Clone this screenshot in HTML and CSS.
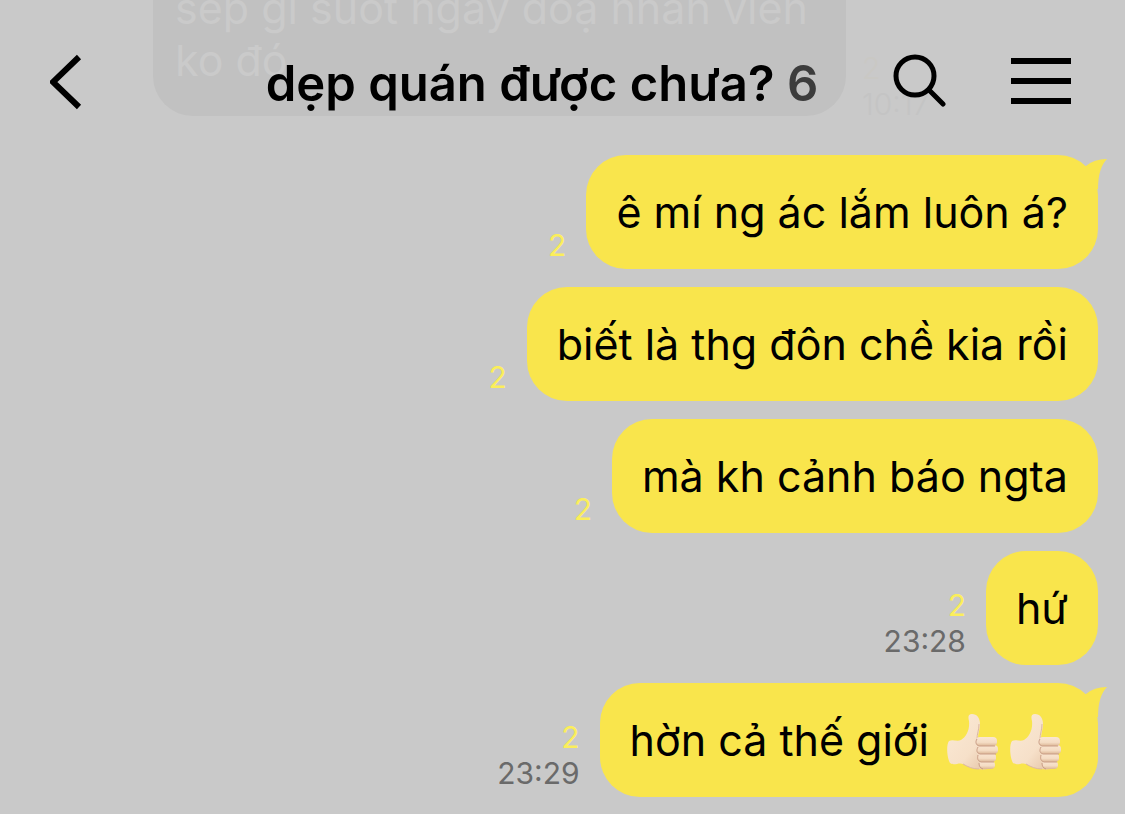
FILE: index.html
```html
<!DOCTYPE html>
<html lang="vi">
<head>
	<meta charset="utf-8">
	<meta name="viewport" content="width=device-width, initial-scale=1">
	<title>dẹp quán được chưa?</title>
	<link rel="stylesheet" href="styles.css">
</head>
<body>

<!-- shared drawings -->
<svg class="defs" aria-hidden="true">
	<defs>
		<linearGradient id="skin" x1="0" y1="0" x2="1" y2="1">
			<stop offset="0" stop-color="#fbead6"/>
			<stop offset="0.6" stop-color="#f6e0c9"/>
			<stop offset="1" stop-color="#e2bf9f"/>
		</linearGradient>
		<linearGradient id="finger" x1="0" y1="0" x2="0" y2="1">
			<stop offset="0" stop-color="#fae6d2"/>
			<stop offset="0.6" stop-color="#f4dcc4"/>
			<stop offset="1" stop-color="#dcb695"/>
		</linearGradient>
		<symbol id="tail" viewBox="0 0 28 36">
			<path d="M6 11Q14 4 27 4Q18 13 18 34L0 34L0 11Z"/>
		</symbol>
		<symbol id="thumb" viewBox="0 0 54 58">
			<path fill="url(#skin)" d="M3 28C7 26 11 29 15 27C20 24 24 17 23 8C22 4 22 1 26 1C31 1 34 5 34 11C34 16 32 21 32 25L44 26L46 53C44 57 38 57 33 56C27 56 22 54 17 51C13 49 8 53 4 50C1 45 0 32 3 28Z"/>
			<path fill="none" stroke="#dcb8a2" d="M17 51C22 54 27 56 33 56M33 11C33 17 31 21 31 26"/>
			<rect x="33" y="48" width="16" height="8" rx="4" fill="url(#finger)"/>
			<rect x="32" y="40" width="18" height="9" rx="4" fill="url(#finger)"/>
			<rect x="31" y="32" width="21" height="9" rx="4" fill="url(#finger)"/>
			<rect x="30" y="24" width="21" height="9" rx="4" fill="url(#finger)"/>
			<path fill="none" stroke="#c99d86" d="M31 26C29 29 30 32 33 33L49 33M32 34C30 38 31 40 34 41L50 41M32 42C31 46 32 48 35 49L48 49M33 50C33 53 34 55 37 56"/>
		</symbol>
	</defs>
</svg>

<header class="topbar">
	<button class="icon-btn" type="button" aria-label="Quay lại">
		<svg width="32" height="56" viewBox="0 0 32 56"><path d="M29 3L3 28L29 53" fill="none" stroke="#000" stroke-width="6"/></svg>
	</button>
	<h1 class="title">dẹp quán được chưa? <span class="members">6</span></h1>
	<button class="icon-btn" type="button" aria-label="Tìm kiếm">
		<svg width="54" height="56" viewBox="0 0 54 56"><circle cx="23" cy="22" r="19" fill="none" stroke="#000" stroke-width="5"/><path d="M37 36L51 50" stroke="#000" stroke-width="5" stroke-linecap="round"/></svg>
	</button>
	<button class="icon-btn menu" type="button" aria-label="Menu">
		<svg width="61" height="48" viewBox="0 0 61 48"><path d="M1 3H61M1 23H61M1 43H61" stroke="#000" stroke-width="6"/></svg>
	</button>
</header>

<main class="chat">
	<div class="message received">
		<p class="bubble">sếp gì suốt ngày doạ nhân viên ko đó</p>
		<div class="meta"><span class="unread">2</span><time>10:17</time></div>
	</div>
	<div class="message sent">
		<div class="meta"><span class="unread">2</span></div>
		<p class="bubble">ê mí ng ác lắm luôn á?<svg class="tail"><use href="#tail"/></svg></p>
	</div>
	<div class="message sent">
		<div class="meta"><span class="unread">2</span></div>
		<p class="bubble">biết là thg đôn chề kia rồi</p>
	</div>
	<div class="message sent">
		<div class="meta"><span class="unread">2</span></div>
		<p class="bubble">mà kh cảnh báo ngta</p>
	</div>
	<div class="message sent">
		<div class="meta"><span class="unread">2</span><time>23:28</time></div>
		<p class="bubble">hứ</p>
	</div>
	<div class="message sent">
		<div class="meta"><span class="unread">2</span><time>23:29</time></div>
		<p class="bubble">hờn cả thế giới <span class="emojis"><svg class="emoji"><use href="#thumb"/></svg><svg class="emoji"><use href="#thumb"/></svg></span><svg class="tail"><use href="#tail"/></svg></p>
	</div>
</main>

</body>
</html>
```
FILE: styles.css
```css
* {
	box-sizing: border-box;
}

body {
	margin: 0;
	height: 100vh;
	overflow: hidden;
	background-color: #c9c9c9;
	color: #000;
	font-family: Inter, "Noto Sans", sans-serif;
}

.defs {
	position: absolute;
	width: 0;
	height: 0;
}

/* the bar floats over the scrolled messages */
.topbar {
	position: absolute;
	top: 0;
	left: 0;
	right: 0;
	z-index: 1;
	display: flex;
	align-items: center;
	padding: 50px 54px 0 50px;
}

.icon-btn {
	display: flex;
	flex: none;
	padding: 0;
	border: 0;
	background: none;
	cursor: pointer;
}

.menu {
	margin-left: 64px;
}

.title {
	flex: 1;
	margin: 0;
	padding: 4px 0 0 110px;
	font-size: 49px;
	line-height: 60px;
	font-weight: 600;
	text-align: center;
	white-space: nowrap;
}

.members {
	color: #3c3c3c;
}

.chat {
	display: flex;
	flex-direction: column;
	justify-content: flex-end;
	gap: 18px;
	height: 100%;
	padding: 0 27px 17px 153px;
}

.message {
	display: flex;
	flex: none;
	align-items: flex-end;
	gap: 20px;
}

.sent {
	justify-content: flex-end;
}

.bubble {
	position: relative;
	margin: 0;
	padding: 30px;
	border-radius: 40px;
	background-color: #f9e54c;
	font-size: 43px;
	line-height: 54px;
}

.meta {
	display: flex;
	flex-direction: column;
	align-items: flex-end;
	padding-bottom: 6px;
	color: #6a6a6a;
	font-size: 30px;
	line-height: 36px;
}

.unread {
	color: #fbee5a;
}

.tail {
	position: absolute;
	top: 0;
	right: -10px;
	width: 28px;
	height: 36px;
	fill: #f9e54c;
}

.emojis {
	display: inline-flex;
	gap: 9px;
	padding: 0 5px;
	vertical-align: middle;
}

.emoji {
	width: 54px;
	height: 58px;
	margin: -8px 0 -4px;
}

/* older message, dimmed under the top bar */
.received {
	gap: 16px;
	margin-bottom: 21px;
}

.received .bubble {
	max-width: 693px;
	padding: 30px 22px;
	background-color: #c1c1c1;
	color: #cacaca;
	line-height: 52px;
}

.received .meta {
	margin-bottom: -6px;
	padding: 0;
	color: #c4c4c4;
	font-weight: 300;
}

.received .unread {
	align-self: flex-start;
	color: #c9c8c4;
}
```
